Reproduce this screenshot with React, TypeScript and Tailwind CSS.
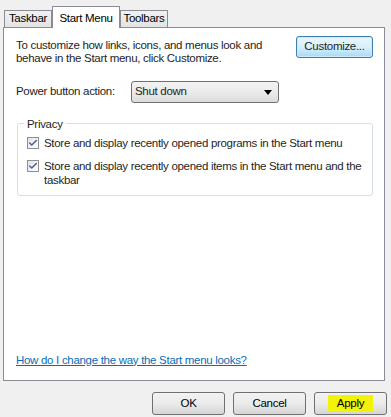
import { Check } from 'lucide-react';

const font = { fontFamily: '"Liberation Sans", Arial, sans-serif' };

function Tab({ label, active }: { label: string; active?: boolean }) {
  if (active) {
    return (
      <div className="relative z-10 -mb-px flex h-[22px] w-[68px] items-start justify-center border border-b-0 border-[#898c95] bg-white pt-[3px] text-black">
        {label}
      </div>
    );
  }
  return (
    <div className="flex h-[17px] w-[48px] items-center justify-center border border-b-0 border-[#898c95] bg-gradient-to-b from-[#f2f2f2] to-[#e3e3e3] text-black">
      {label}
    </div>
  );
}

function CheckRow({ children }: { children: React.ReactNode }) {
  return (
    <div className="flex items-start gap-[5px]">
      <span className="mt-[1px] flex h-[12px] w-[12px] shrink-0 items-center justify-center border border-[#8e8f8f] bg-gradient-to-br from-[#dfe3ea] to-[#ffffff]">
        <Check size={10} strokeWidth={3.5} className="text-[#4a5f97]" />
      </span>
      <span className="whitespace-nowrap leading-[14px]">{children}</span>
    </div>
  );
}

function Button({ label, highlight }: { label: string; highlight?: boolean }) {
  return (
    <div className="flex h-[23px] w-[73px] items-center justify-center rounded-[3px] border border-[#707070] bg-gradient-to-b from-[#f2f2f2] via-[#ebebeb] to-[#d5d5d5] text-black">
      {highlight ? (
        <span className="flex h-[17px] w-[45px] items-center justify-center bg-[#f2f20a]">{label}</span>
      ) : (
        label
      )}
    </div>
  );
}

export default function App() {
  return (
    <div
      className="h-[417px] w-[391px] overflow-hidden bg-[#f0f0f0] text-[11.5px] tracking-[-0.3px] text-[#1e1e1e]"
      style={font}
    >
      <div className="flex items-end pl-[4px] pt-[6px]">
        <Tab label="Taskbar" />
        <Tab label="Start Menu" active />
        <Tab label="Toolbars" />
      </div>
      <div className="ml-[3px] flex h-[354px] w-[382px] flex-col border border-[#898c95] bg-white">
        <div className="flex items-start justify-between pl-[12px] pr-[11px] pt-[8px]">
          <p className="mt-[3px] whitespace-nowrap leading-[13px]">
            To customize how links, icons, and menus look and
            <br />
            behave in the Start menu, click Customize.
          </p>
          <div className="flex h-[22px] w-[77px] items-center justify-center rounded-[3px] border border-[#3c7fb1] bg-gradient-to-b from-[#eaf6fd] via-[#d9f0fc] to-[#a7d9f5] shadow-[inset_0_0_0_1px_#c8ebfb]">
            Customize...
          </div>
        </div>
        <div className="mt-[16px] flex items-center pl-[12px]">
          <span className="w-[115px]">Power button action:</span>
          <div className="flex h-[22px] w-[148px] items-center justify-between rounded-[3px] border border-[#707070] bg-gradient-to-b from-[#f2f2f2] via-[#ebebeb] to-[#dcdcdc] pl-[3px] pr-[6px]">
            <span>Shut down</span>
            <span className="h-0 w-0 border-x-[4px] border-t-[5px] border-x-transparent border-t-black" />
          </div>
        </div>
        <div className="relative ml-[13px] mt-[20px] h-[73px] w-[356px] rounded-[3px] border border-[#d5dfe5] pl-[9px] pr-[8px] pt-[12px]">
          <span className="absolute -top-[8px] left-[6px] bg-white px-[3px]">Privacy</span>
          <div className="flex flex-col gap-[9px]">
            <CheckRow>Store and display recently opened programs in the Start menu</CheckRow>
            <CheckRow>
              Store and display recently opened items in the Start menu and the
              <br />
              taskbar
            </CheckRow>
          </div>
        </div>
        <div className="mt-auto pb-[11px] pl-[12px]">
          <span className="text-[#0a6cb4] underline">How do I change the way the Start menu looks?</span>
        </div>
      </div>
      <div className="flex justify-end gap-[8px] pr-[4px] pt-[11px]">
        <Button label="OK" />
        <Button label="Cancel" />
        <Button label="Apply" highlight />
      </div>
    </div>
  );
}
